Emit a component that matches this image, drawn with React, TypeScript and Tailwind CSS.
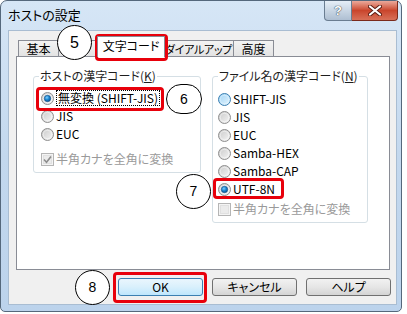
import React from "react";

const jp = "font-['Noto_Sans_CJK_JP',sans-serif] [font-feature-settings:'palt']";

function Radio({ checked = false, hover = false }: { checked?: boolean; hover?: boolean }) {
  const id = React.useId().replace(/:/g, "");
  return (
    <svg width="13" height="13" viewBox="0 0 13 13" className="shrink-0">
      <defs>
        <linearGradient id={`o${id}`} x1="0" y1="0" x2="1" y2="1">
          <stop offset="0" stopColor={hover ? "#9fd3f5" : "#c8c8c8"} />
          <stop offset="1" stopColor={hover ? "#e6f5fd" : "#f7f7f7"} />
        </linearGradient>
        <radialGradient id={`d${id}`} cx="0.4" cy="0.35" r="0.7">
          <stop offset="0" stopColor="#7fd0ff" />
          <stop offset="0.5" stopColor="#1b86d0" />
          <stop offset="1" stopColor="#0a4f8c" />
        </radialGradient>
      </defs>
      <circle cx="6.5" cy="6.5" r="6" fill={`url(#o${id})`} stroke={hover ? "#3c7fb1" : "#8f8f8f"} strokeWidth="1" />
      <circle cx="6.5" cy="6.5" r="4.2" fill="none" stroke={hover ? "#e9f6fe" : "#ffffff"} strokeOpacity="0.6" strokeWidth="0.8" />
      {checked && <circle cx="6.5" cy="6.5" r="3.2" fill={`url(#d${id})`} stroke="#16508a" strokeWidth="0.6" />}
    </svg>
  );
}

function Check({ checked = false }: { checked?: boolean }) {
  return (
    <svg width="13" height="13" viewBox="0 0 13 13" className="shrink-0">
      <rect x="0.5" y="0.5" width="12" height="12" fill="#f4f4f4" stroke="#b5b5b5" />
      <rect x="2.5" y="2.5" width="8" height="8" fill="#ebebeb" stroke="#e0e0e0" />
      {checked && <path d="M3 6.5 L5.5 9.2 L10 3.5" fill="none" stroke="#8d8d8d" strokeWidth="1.6" />}
    </svg>
  );
}

function Row({ children, className = "" }: { children: React.ReactNode; className?: string }) {
  return <div className={`flex h-[18px] items-center gap-[2px] whitespace-nowrap ${className}`}>{children}</div>;
}

function Circle({ n, className }: { n: string; className: string }) {
  return (
    <div
      className={`absolute flex items-center justify-center rounded-full border border-black bg-white font-['Liberation_Sans',sans-serif] text-black ${className}`}
    >
      {n}
    </div>
  );
}

function RedBox({ className }: { className: string }) {
  return <div className={`pointer-events-none absolute rounded-[4px] border-[3px] border-[#e8000b] ${className}`} />;
}

function Tab({ label, selected = false, w }: { label: string; selected?: boolean; w: string }) {
  if (selected) {
    return (
      <div
        className={`relative z-10 -mx-[2px] -mb-[1px] flex h-[21px] items-start justify-center whitespace-nowrap border border-b-0 border-[#898c95] bg-white pt-[1px] text-[12px] leading-[16px] text-black ${w}`}
      >
        {label}
      </div>
    );
  }
  return (
    <div
      className={`flex h-[16px] items-center justify-center overflow-hidden whitespace-nowrap border border-b-0 border-[#898c95] bg-gradient-to-b from-[#f3f3f3] to-[#e3e3e3] pt-[1px] leading-[14px] text-black ${w}`}
    >
      {label}
    </div>
  );
}

function Button({ label, def = false }: { label: string; def?: boolean }) {
  return (
    <div
      className={`flex h-[18px] w-[85px] items-center justify-center rounded-[3px] border text-[12px] leading-[14px] text-black ${
        def
          ? "border-[#3c7fb1] bg-gradient-to-b from-[#eaf6fd] via-[#d9f0fc] to-[#bee6fd]"
          : "border-[#707070] bg-gradient-to-b from-[#f2f2f2] via-[#e6e6e6] to-[#d4d4d4]"
      }`}
    >
      {label}
    </div>
  );
}

export default function App() {
  return (
    <div className={`relative h-[314px] w-[407px] overflow-hidden bg-white ${jp}`}>
      <div className="flex h-[312px] w-[402px] flex-col rounded-t-[7px] rounded-b-[5px] border border-[#55687c] bg-gradient-to-b from-[#d6e6f6] via-[#c3d8ee] to-[#bcd3ec]">
        {/* title bar */}
        <div className="flex h-[29px] items-start">
          <div className="pl-[7px] pt-[5px] text-[13px] leading-[18px] text-black">ホストの設定</div>
          <div className="ml-auto mr-[3px] flex">
            <div className="flex h-[20px] w-[28px] items-center justify-center rounded-bl-[4px] border border-t-0 border-[#6a7d91] bg-gradient-to-b from-[#e6eef7] via-[#c9d6e4] to-[#aebfd2] font-['Liberation_Sans',sans-serif] text-[13px] font-bold leading-none text-white [text-shadow:0_0_1px_#2d3a48,0_0_1px_#2d3a48]">
              ?
            </div>
            <div className="flex h-[20px] w-[46px] items-center justify-center rounded-br-[4px] border border-l-0 border-t-0 border-[#7a2a1c] bg-gradient-to-b from-[#eaa99b] via-[#c9452c] to-[#d87058]">
              <svg width="14" height="11" viewBox="0 0 14 11">
                <path d="M2 1.5 L12 9.5 M12 1.5 L2 9.5" stroke="#5a1c12" strokeWidth="4" strokeLinecap="round" />
                <path d="M2 1.5 L12 9.5 M12 1.5 L2 9.5" stroke="#ffffff" strokeWidth="2.2" strokeLinecap="round" />
              </svg>
            </div>
          </div>
        </div>

        {/* client */}
        <div className="ml-[7px] mr-[4px] flex h-[275px] flex-col border border-[#a9bdd2] bg-[#f0f0f0]">
          {/* tabs */}
          <div className="flex h-[25px] items-end pl-[9px]">
            <Tab label="基本" w="w-[41px] text-[12px]" />
            <Tab label="" w="w-[41px] -ml-[1px]" />
            <Tab label="文字コード" selected w="w-[68px]" />
            <Tab label="ダイアルアップ" w="w-[71px] text-[11px] tracking-[-0.3px]" />
            <Tab label="高度" w="w-[41px] -ml-[1px] text-[12px]" />
          </div>
          {/* panel */}
          <div className="ml-[7px] flex h-[214px] w-[374px] gap-[11px] border border-[#898c95] bg-white pl-[16px] pt-[11px] text-[12px] leading-[16px]">
            <fieldset className="h-[105px] w-[168px] rounded-[3px] border border-[#d5dfe5] px-0">
              <legend className="ml-[5px] px-[1px] text-[12px] leading-[16px] text-[#1e1e1e]">
                ホストの漢字コード(<span className="underline">K</span>)
              </legend>
              <div className="pl-[7px] pt-[5px]">
                <Row>
                  <Radio checked />
                  <span className="border border-dotted border-black px-[1px] leading-[14px] text-black">無変換 (SHIFT-JIS)</span>
                </Row>
                <Row>
                  <Radio />
                  <span className="text-black">JIS</span>
                </Row>
                <Row>
                  <Radio />
                  <span className="text-black">EUC</span>
                </Row>
                <Row className="mt-[7px]">
                  <Check checked />
                  <span className="text-[#9a9a9a]">半角カナを全角に変換</span>
                </Row>
              </div>
            </fieldset>
            <fieldset className="h-[155px] w-[156px] rounded-[3px] border border-[#d5dfe5] px-0">
              <legend className="ml-[5px] px-[1px] text-[12px] leading-[16px] text-[#1e1e1e]">
                ファイル名の漢字コード(<span className="underline">N</span>)
              </legend>
              <div className="pl-[5px] pt-[6px]">
                <Row>
                  <Radio hover />
                  <span className="text-black">SHIFT-JIS</span>
                </Row>
                <Row>
                  <Radio />
                  <span className="text-black">JIS</span>
                </Row>
                <Row>
                  <Radio />
                  <span className="text-black">EUC</span>
                </Row>
                <Row>
                  <Radio />
                  <span className="text-black">Samba-HEX</span>
                </Row>
                <Row>
                  <Radio />
                  <span className="text-black">Samba-CAP</span>
                </Row>
                <Row>
                  <Radio checked />
                  <span className="text-black">UTF-8N</span>
                </Row>
                <Row className="mt-[2px]">
                  <Check />
                  <span className="text-[#9a9a9a]">半角カナを全角に変換</span>
                </Row>
              </div>
            </fieldset>
          </div>
          {/* buttons */}
          <div className="mt-[8px] flex justify-end gap-[9px] pr-[5px]">
            <Button label="OK" def />
            <Button label="キャンセル" />
            <Button label="ヘルプ" />
          </div>
        </div>
      </div>

      {/* annotations */}
      <Circle n="5" className="left-[57px] top-[25px] h-[35px] w-[35px] text-[16px]" />
      <RedBox className="left-[95px] top-[34px] h-[27px] w-[73px]" />
      <RedBox className="left-[36px] top-[87px] h-[24px] w-[128px]" />
      <Circle n="6" className="left-[166px] top-[84px] h-[30px] w-[36px] text-[14px]" />
      <Circle n="7" className="left-[176px] top-[174px] h-[35px] w-[35px] text-[14px]" />
      <RedBox className="left-[213px] top-[178px] h-[21px] w-[71px]" />
      <Circle n="8" className="left-[75px] top-[270px] h-[35px] w-[35px] text-[14px]" />
      <RedBox className="left-[113px] top-[272px] h-[31px] w-[94px]" />
    </div>
  );
}
